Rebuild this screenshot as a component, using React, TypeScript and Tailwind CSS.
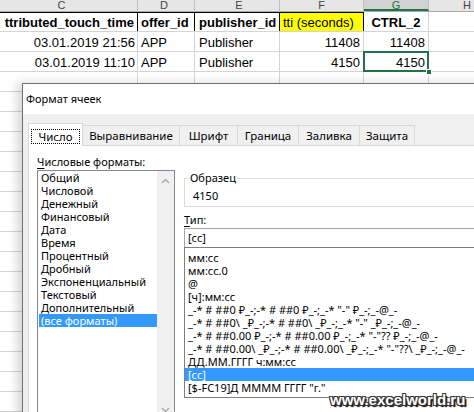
import React from "react";

const blankRows = Array.from({ length: 17 }, (_, i) => i);

function ChevronUp() {
  return (
    <svg width="9" height="6" viewBox="0 0 9 6" className="block">
      <path d="M1 5 L4.5 1.5 L8 5" fill="none" stroke="#a3a3a3" strokeWidth="1.2" />
    </svg>
  );
}
function ChevronDown() {
  return (
    <svg width="9" height="6" viewBox="0 0 9 6" className="block">
      <path d="M1 1 L4.5 4.5 L8 1" fill="none" stroke="#a3a3a3" strokeWidth="1.2" />
    </svg>
  );
}

const leftItems = [
  "Общий",
  "Числовой",
  "Денежный",
  "Финансовый",
  "Дата",
  "Время",
  "Процентный",
  "Дробный",
  "Экспоненциальный",
  "Текстовый",
  "Дополнительный",
  "(все форматы)",
];

const rightItems = [
  "мм:сс",
  "мм:сс.0",
  "@",
  "[ч]:мм:сс",
  '_-* # ##0 ₽_-;-* # ##0 ₽_-;_-* "-" ₽_-;_-@_-',
  '_-* # ##0\\ _₽_-;-* # ##0\\ _₽_-;_-* "-" _₽_-;_-@_-',
  '_-* # ##0.00 ₽_-;-* # ##0.00 ₽_-;_-* "-"?? ₽_-;_-@_-',
  '_-* # ##0.00\\ _₽_-;-* # ##0.00\\ _₽_-;_-* "-"??\\ _₽_-;_-@_-',
  "ДД.ММ.ГГГГ ч:мм:сс",
  "[сс]",
  '[$-FC19]Д ММММ ГГГГ "г."',
];

export default function App() {
  return (
    <div className="relative w-[474px] h-[412px] overflow-hidden bg-white font-['Liberation_Sans',Arial,sans-serif] text-[13px] text-black">
      {/* Spreadsheet */}
      <div className="flex flex-col">
        <div className="flex h-[12px] bg-[#e6e6e6] border-b border-[#ababab] text-[11px] leading-[11px] text-[#444]">
          <div className="w-[138px] shrink-0 border-r border-[#c0c0c0] flex justify-center pr-[14px]">C</div>
          <div className="w-[57px] shrink-0 border-r border-[#c0c0c0] flex justify-center pr-[4px]">D</div>
          <div className="w-[85px] shrink-0 border-r border-[#c0c0c0] flex justify-center pl-[4px]">E</div>
          <div className="w-[84px] shrink-0 border-r border-[#c0c0c0] flex justify-center">F</div>
          <div className="w-[65px] shrink-0 border-r border-[#c0c0c0] bg-[#d2d2d2] text-[#217346] border-b-2 border-b-[#217346] flex justify-center">G</div>
          <div className="w-[76px] shrink-0 flex justify-center">H</div>
        </div>
        <div className="flex h-[20px] border-b border-[#d4d4d4] font-bold leading-[15px]">
          <div className="w-[138px] shrink-0 border-r border-t border-black flex items-end justify-end pr-[3px] pb-[1px] overflow-hidden whitespace-nowrap">ttributed_touch_time</div>
          <div className="w-[57px] shrink-0 border-r border-t border-black flex items-end pl-[3px] pb-[1px] overflow-hidden whitespace-nowrap">offer_id</div>
          <div className="w-[85px] shrink-0 border-r border-t border-black flex items-end pl-[4px] pb-[1px] overflow-hidden whitespace-nowrap">publisher_id</div>
          <div className="w-[84px] shrink-0 border-r border-t border-black bg-[#ffff00] font-normal flex items-end pl-[3px] pb-[1px] overflow-hidden whitespace-nowrap">tti (seconds)</div>
          <div className="w-[65px] shrink-0 border-r border-[#d4d4d4] flex items-end justify-center pb-[1px]">CTRL_2</div>
          <div className="w-[76px] shrink-0"></div>
        </div>
        <div className="flex h-[20px] border-b border-[#d4d4d4] leading-[15px]">
          <div className="w-[138px] shrink-0 border-r border-[#d4d4d4] flex items-end justify-end pr-[2px] pb-[1px] whitespace-nowrap">03.01.2019 21:56</div>
          <div className="w-[57px] shrink-0 border-r border-[#d4d4d4] flex items-end pl-[3px] pb-[1px]">APP</div>
          <div className="w-[85px] shrink-0 border-r border-[#d4d4d4] flex items-end pl-[4px] pb-[1px]">Publisher</div>
          <div className="w-[84px] shrink-0 border-r border-[#d4d4d4] flex items-end justify-end pr-[3px] pb-[1px]">11408</div>
          <div className="w-[65px] shrink-0 border-r border-[#d4d4d4] flex items-end justify-end pr-[3px] pb-[1px]">11408</div>
          <div className="w-[76px] shrink-0"></div>
        </div>
        <div className="flex h-[20px] border-b border-[#d4d4d4] leading-[15px]">
          <div className="w-[138px] shrink-0 border-r border-[#d4d4d4] flex items-end justify-end pr-[2px] pb-[1px] whitespace-nowrap">03.01.2019 11:10</div>
          <div className="w-[57px] shrink-0 border-r border-[#d4d4d4] flex items-end pl-[3px] pb-[1px]">APP</div>
          <div className="w-[85px] shrink-0 border-r border-[#d4d4d4] flex items-end pl-[4px] pb-[1px]">Publisher</div>
          <div className="w-[84px] shrink-0 border-r border-[#d4d4d4] flex items-end justify-end pr-[3px] pb-[1px]">4150</div>
          <div className="relative w-[65px] shrink-0 border-r border-[#d4d4d4] flex items-end justify-end pr-[3px] pb-[1px]">
            4150
            <div className="absolute -left-[1px] -top-[1px] -right-[1px] -bottom-[1px] border-2 border-[#217346]"></div>
            <div className="absolute -right-[4px] -bottom-[4px] w-[6px] h-[6px] bg-[#217346] border border-white"></div>
          </div>
          <div className="w-[76px] shrink-0"></div>
        </div>
        {blankRows.map((r) => (
          <div key={r} className="flex h-[20px] border-b border-[#d4d4d4]">
            <div className="w-[138px] shrink-0 border-r border-[#d4d4d4]"></div>
            <div className="w-[57px] shrink-0 border-r border-[#d4d4d4]"></div>
            <div className="w-[85px] shrink-0 border-r border-[#d4d4d4]"></div>
            <div className="w-[84px] shrink-0 border-r border-[#d4d4d4]"></div>
            <div className="w-[65px] shrink-0 border-r border-[#d4d4d4]"></div>
            <div className="w-[76px] shrink-0"></div>
          </div>
        ))}
      </div>

      {/* Dialog */}
      <div className="absolute left-[22px] top-[83px] w-[520px] h-[360px] flex flex-col border border-[#707070] shadow-[-5px_0_9px_rgba(0,0,0,0.16)] font-['Noto_Sans','Open_Sans',sans-serif] text-[11px] text-black">
        <div className="h-[30px] shrink-0 bg-white flex items-center pl-[3px] leading-[16px] text-[11px]">Формат ячеек</div>
        <div className="flex-1 bg-[#f0f0f0] pl-[5px] flex flex-col">
          <div className="h-[31px] shrink-0 flex items-end leading-[15px] text-[11.5px]">
            <div className="relative z-10 w-[55px] h-[23px] -mb-[1px] bg-white border-l border-t border-r border-[#d9d9d9] flex items-start justify-center pt-[5px]">
              <span className="border border-dotted border-black px-[6px] h-[15px] leading-[13px] flex items-center">Число</span>
            </div>
            <div className="w-[97px] h-[20px] border-t border-r border-[#d9d9d9] flex items-center justify-center">Выравнивание</div>
            <div className="w-[58px] h-[20px] border-t border-r border-[#d9d9d9] flex items-center justify-center">Шрифт</div>
            <div className="w-[61px] h-[20px] border-t border-r border-[#d9d9d9] flex items-center justify-center">Граница</div>
            <div className="w-[61px] h-[20px] border-t border-r border-[#d9d9d9] flex items-center justify-center">Заливка</div>
            <div className="w-[55px] h-[20px] border-t border-r border-[#d9d9d9] flex items-center justify-center">Защита</div>
          </div>
          <div className="flex-1 bg-white border-l border-t border-[#d9d9d9] flex pl-[8px] pt-[9px]">
            {/* left column */}
            <div className="w-[138px] shrink-0 flex flex-col">
              <div className="h-[15px] leading-[14px] whitespace-nowrap">
                <span className="underline underline-offset-2">Ч</span>исловые форматы:
              </div>
              <div className="h-[250px] border border-[#828790] flex">
                <div className="flex-1 pl-[1px] flex flex-col">
                  {leftItems.map((t, i) => (
                    <div
                      key={t}
                      className={
                        i === leftItems.length - 1
                          ? "h-[13px] leading-[13px] pl-[2px] bg-[#3399ff] text-white whitespace-nowrap"
                          : "h-[13px] leading-[13px] pl-[2px] whitespace-nowrap"
                      }
                    >
                      {t}
                    </div>
                  ))}
                </div>
                <div className="w-[17px] shrink-0 bg-[#f0f0f0] flex flex-col items-center justify-between pt-[7px] pb-[6px]">
                  <ChevronUp />
                  <ChevronDown />
                </div>
              </div>
            </div>
            {/* right column */}
            <div className="flex-1 ml-[9px] pt-[16px] flex flex-col pr-[20px]">
              <fieldset className="border border-[#dcdcdc]">
                <legend className="ml-[4px] px-[1px] leading-[14px]">Образец</legend>
                <div className="pl-[8px] pt-[4px] pb-[3px] leading-[14px]">4150</div>
              </fieldset>
              <div className="mt-[6px] h-[15px] leading-[14px]">
                <span className="underline underline-offset-2">Т</span>ип:
              </div>
              <div className="h-[19px] border-l border-t border-r border-[#a6a6a6] flex items-center pl-[3px] leading-[14px]">[сс]</div>
              <div className="h-[151px] border border-[#7f7f7f] pt-[3px] flex flex-col">
                {rightItems.map((t, i) => (
                  <div
                    key={i}
                    className={
                      i === 9
                        ? "h-[13px] leading-[13px] pl-[3px] bg-[#3399ff] text-white whitespace-nowrap"
                        : "h-[13px] leading-[13px] pl-[3px] whitespace-nowrap"
                    }
                  >
                    {t}
                  </div>
                ))}
              </div>
            </div>
          </div>
        </div>
      </div>

      {/* Watermark */}
      <div className="absolute left-[330px] top-[391px] leading-[17px] text-[15px] font-bold text-white font-['Liberation_Sans',Arial,sans-serif] [text-shadow:1px_1px_0_#333,-1px_-1px_0_#333,1px_-1px_0_#333,-1px_1px_0_#333,2px_2px_1px_#000]">
        www.excelworld.ru
      </div>
    </div>
  );
}
